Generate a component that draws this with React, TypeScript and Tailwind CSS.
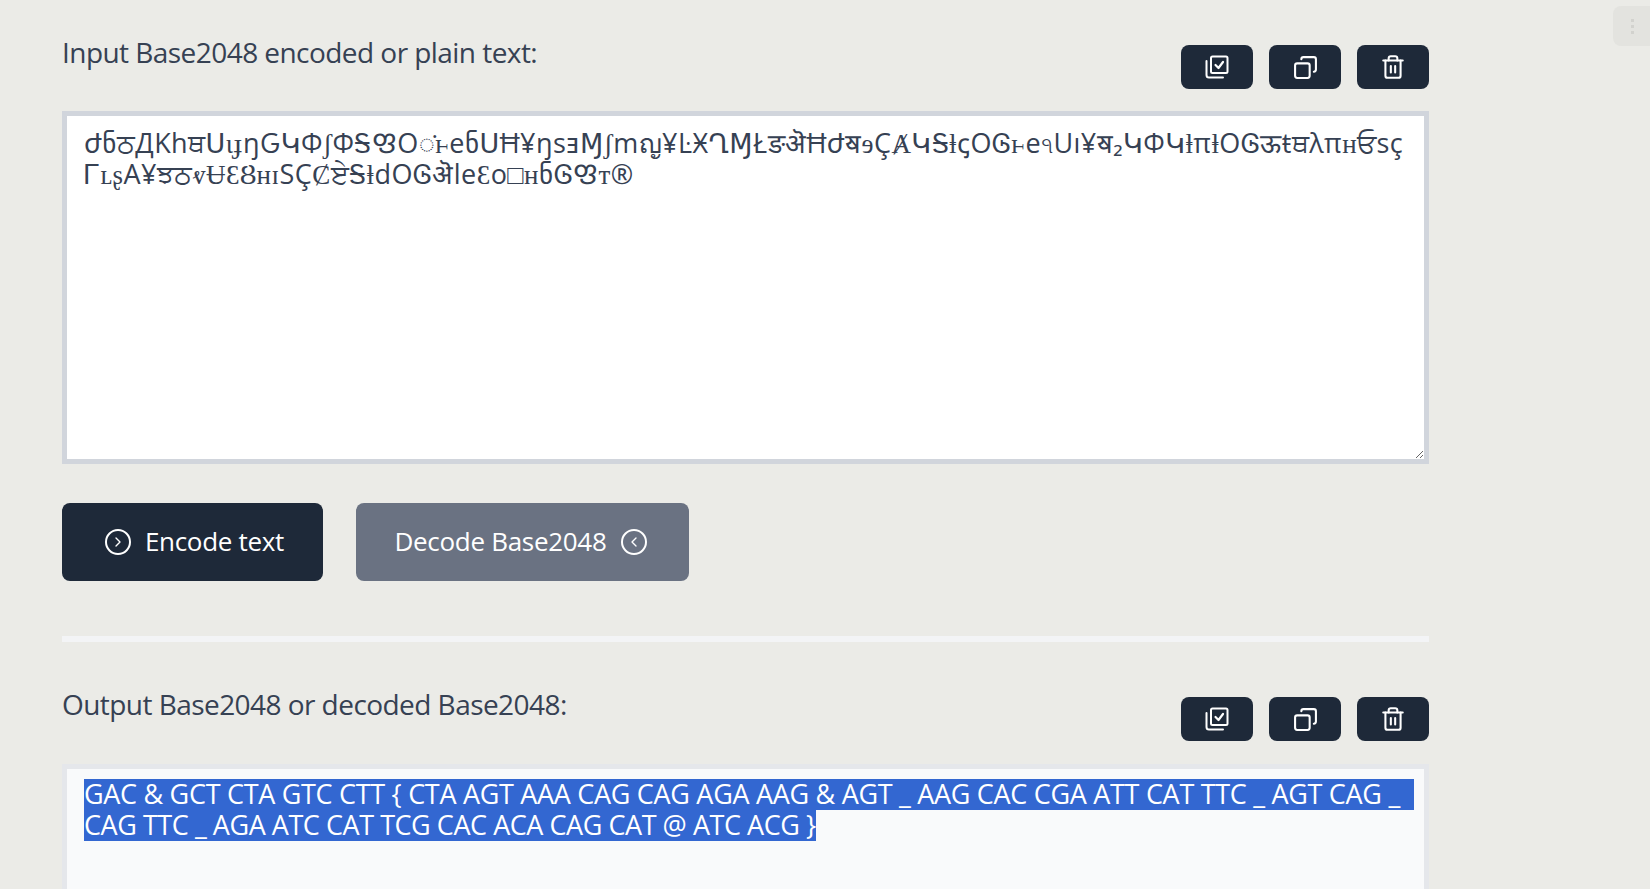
import React from 'react';
import { ChevronRight, ChevronLeft, Copy, Trash2 } from 'lucide-react';

const inputText =
  'ժნਠДKhਥՍɩɟŋԌԿΦʃΦᎦᲤO◌̇ⱶeნՍĦ¥ŋsⱻⱮʃmญ¥ĿӾՂⱮŁङऄĦժॺɘÇȺԿᎦⱡꞔOᎶⱶeঀUı¥ॺ₂ԿΦԿⱡπⱡOᎶऊŧਥλπʜਓsç\nᎱʟʂA¥ਝਠⱴɄƐȢʜɪSÇȻਏᎦⱡdOᎶऄleƐo□ʜნᎶᲤᴛ®';

function CheckStackIcon() {
  return (
    <svg viewBox="0 0 24 24" className="w-6 h-6" fill="none" stroke="currentColor" strokeWidth={2} strokeLinecap="round" strokeLinejoin="round">
      <path d="M1.5 6v14a2.5 2.5 0 0 0 2.5 2.5h14" />
      <rect x="6" y="1.5" width="16.5" height="16.5" rx="1.5" />
      <path d="M10.5 10l3 3 4.5-6" strokeWidth={2.2} />
    </svg>
  );
}

function IconButton({ children }: { children: React.ReactNode }) {
  return (
    <button type="button" className="w-[72px] h-[44px] flex items-center justify-center rounded-lg bg-gray-800 text-white">
      {children}
    </button>
  );
}

function Header({ label }: { label: string }) {
  return (
    <div className="flex items-start justify-between">
      <h2 className="text-[28px] leading-[38px] tracking-[-0.55px] text-gray-700 -mt-[12px]">{label}</h2>
      <div className="flex gap-4">
        <IconButton><CheckStackIcon /></IconButton>
        <IconButton><Copy className="w-[25px] h-[25px] -scale-x-100" strokeWidth={2} /></IconButton>
        <IconButton><Trash2 className="w-[26px] h-[26px]" strokeWidth={1.9} /></IconButton>
      </div>
    </div>
  );
}

export default function App() {
  return (
    <div className="h-[889px] overflow-hidden bg-[#ebebe7] font-['Open_Sans','DejaVu_Sans',sans-serif] relative">
      <div className="absolute top-[6px] -right-2 w-[45px] h-[40px] rounded-lg bg-[#e3e3df] pl-[18px] flex flex-col justify-center gap-[3px]">
        <span className="w-[3px] h-[3px] bg-[#d2d2ce]" />
        <span className="w-[3px] h-[3px] bg-[#d2d2ce]" />
        <span className="w-[3px] h-[3px] bg-[#d2d2ce]" />
      </div>

      <div className="w-[1367px] ml-[62px] pt-[45px]">
        <Header label="Input Base2048 encoded or plain text:" />

        <textarea
          defaultValue={inputText}
          className="block w-full h-[353px] mt-[22px] border-[5px] border-gray-300 bg-white px-[17px] pt-[11px] pb-2 text-[27px] leading-[31px] tracking-[0.45px] text-gray-700 outline-none whitespace-pre overflow-hidden font-['Open_Sans','Liberation_Serif','DejaVu_Sans',serif]"
        />

        <div className="flex gap-[33px] mt-[39px]">
          <button type="button" className="w-[261px] h-[78px] pb-[1px] pl-[4px] rounded-lg bg-gray-800 text-white text-[26px] tracking-[-0.3px] flex items-center justify-center gap-[14px]">
            <span className="w-[26px] h-[26px] rounded-full border-2 border-white flex items-center justify-center">
              <ChevronRight className="w-4 h-4" strokeWidth={2} />
            </span>
            Encode text
          </button>
          <button type="button" className="w-[333px] h-[78px] pb-[1px] pr-[4px] rounded-lg bg-gray-500 text-white text-[26px] tracking-[-0.3px] flex items-center justify-center gap-[14px]">
            Decode Base2048
            <span className="w-[26px] h-[26px] rounded-full border-2 border-white flex items-center justify-center">
              <ChevronLeft className="w-4 h-4" strokeWidth={2} />
            </span>
          </button>
        </div>

        <div className="h-[6px] mt-[55px] bg-gray-100" />

        <div className="mt-[55px]">
          <Header label="Output Base2048 or decoded Base2048:" />
        </div>

        <div className="h-[300px] mt-[23px] border-[5px] border-gray-200 bg-gray-50 pl-[17px] pr-[10px] py-[10px] text-[27px] leading-[29px] text-white flex flex-col items-start">
          <div className="w-full pb-[2px] bg-[#3367d1] whitespace-nowrap tracking-[-0.3px]">GAC &amp; GCT CTA GTC CTT {'{'} CTA AGT AAA CAG CAG AGA AAG &amp; AGT _ AAG CAC CGA ATT CAT TTC _ AGT CAG _</div>
          <div className="pb-[2px] bg-[#3367d1] whitespace-nowrap tracking-[-0.45px]">CAG TTC _ AGA ATC CAT TCG CAC ACA CAG CAT @ ATC ACG {'}'}</div>
        </div>
      </div>
    </div>
  );
}
